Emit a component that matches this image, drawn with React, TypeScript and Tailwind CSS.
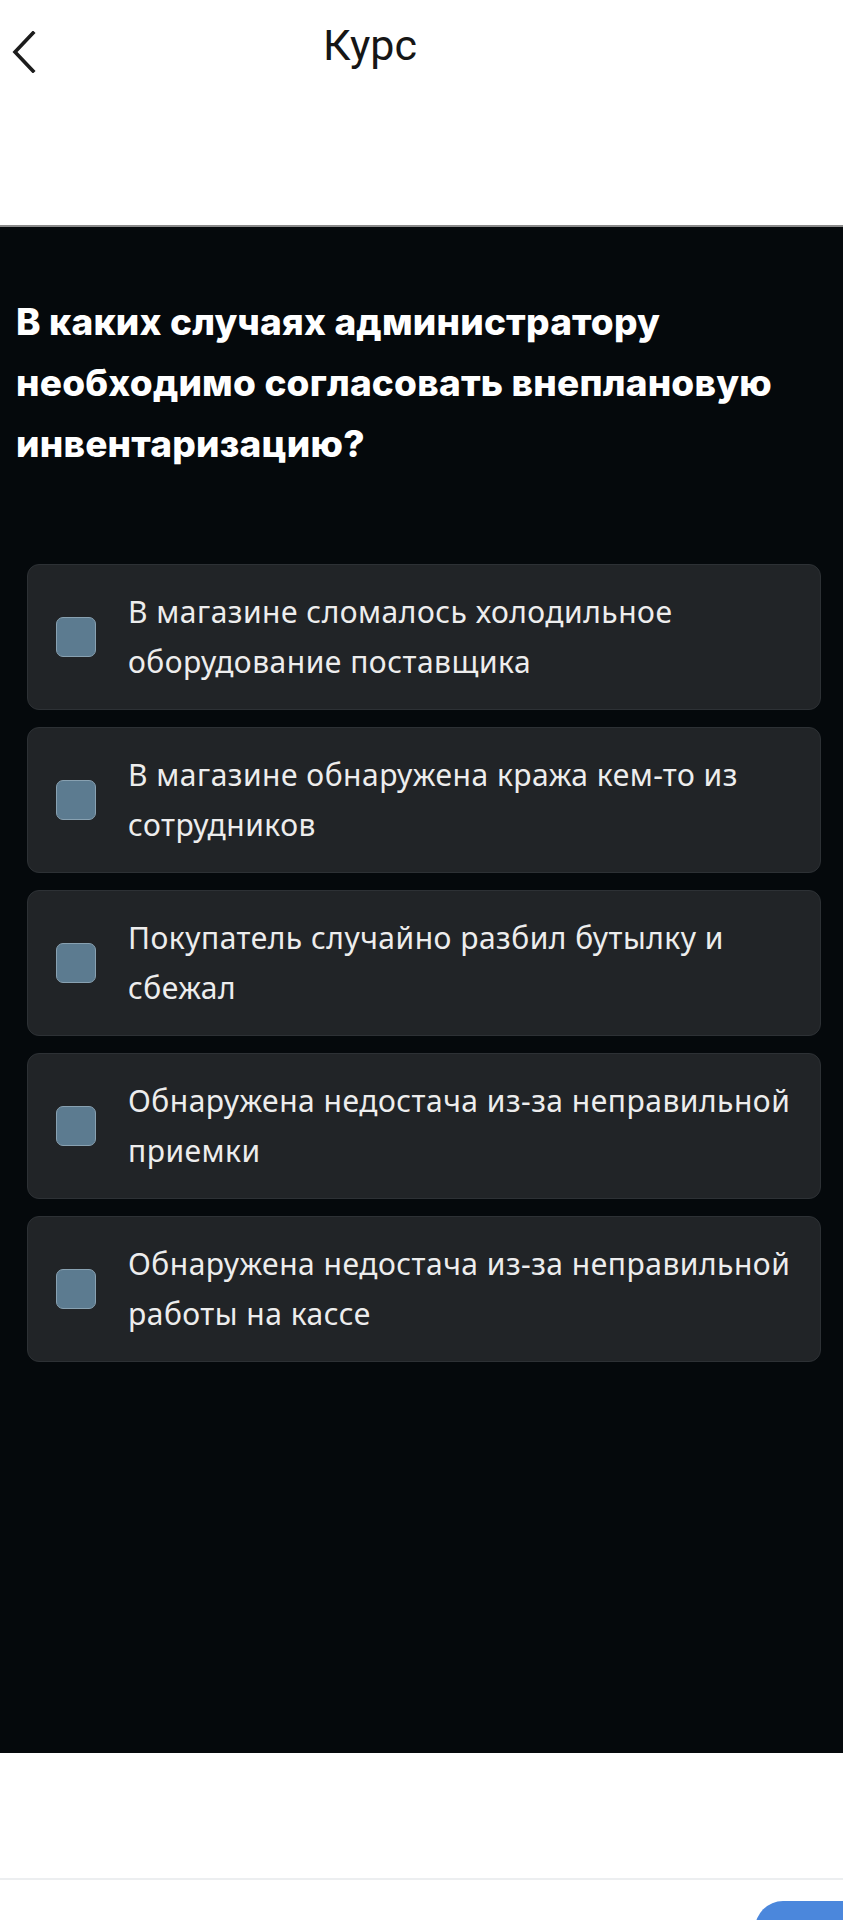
const options = [
    "В магазине сломалось холодильное оборудование поставщика",
    "В магазине обнаружена кража кем-то из сотрудников",
    "Покупатель случайно разбил бутылку и сбежал",
    "Обнаружена недостача из-за неправильной приемки",
    "Обнаружена недостача из-за неправильной работы на кассе",
];

const BackIcon = () => (
    <svg width="26" height="42" viewBox="0 0 26 42" fill="none">
        <path d="M22 2 L4 21 L22 40" stroke="#1c1c1c" strokeWidth="3.6" strokeLinecap="square" strokeLinejoin="miter" />
    </svg>
);

const Header = () => {
    return (
        <header className="shrink-0 h-[225px] bg-white">
            <div className="flex items-center h-[104px]">
                <button className="ml-[11px] w-[49px] flex items-center">
                    <BackIcon />
                </button>
                <h1 className="flex-1 mr-[163px] mb-[14px] text-center text-[43px] text-[#161616] font-['Roboto',sans-serif] leading-none">Курс</h1>
            </div>
        </header>
    );
};

const Option = ({ text }: { text: string }) => {
    return (
        <label className="flex items-center h-[146px] rounded-xl border border-[#2d3135] bg-[#212427] pl-[28px] pr-[22px]">
            <span className="shrink-0 w-[40px] h-[40px] rounded-[7px] bg-[#5c7b90] border border-[#88a1b1]"></span>
            <span className="ml-[32px] text-[30px] leading-[50px] tracking-[0.5px] text-[#ededed] font-['Noto_Sans',sans-serif]">{text}</span>
        </label>
    );
};

export default function App() {
    return (
        <div className="w-full h-[1920px] overflow-hidden bg-white flex flex-col">
            <Header />
            <main className="shrink-0 h-[1528px] bg-[#05090c] border-t-2 border-[#8a8a8a]">
                <h2 className="px-[16px] pt-[64px] text-[37px] leading-[61px] font-extrabold text-white font-['Inter',sans-serif] tracking-[0.2px]">
                    В каких случаях администратору необходимо согласовать внеплановую инвентаризацию?
                </h2>
                <div className="mt-[90px] ml-[27px] mr-[22px] flex flex-col gap-[17px]">
                    {options.map((o) => (
                        <Option key={o} text={o} />
                    ))}
                </div>
            </main>
            <footer className="flex-1 min-h-0 overflow-hidden flex flex-col">
                <div className="shrink-0 h-[125px]"></div>
                <div className="shrink-0 h-[2px] bg-[#eceef0]"></div>
                <div className="shrink-0 flex justify-end pt-[21px]">
                    <button className="w-[88px] h-[56px] rounded-l-[28px] bg-[#4b87dc]"></button>
                </div>
            </footer>
        </div>
    );
}
